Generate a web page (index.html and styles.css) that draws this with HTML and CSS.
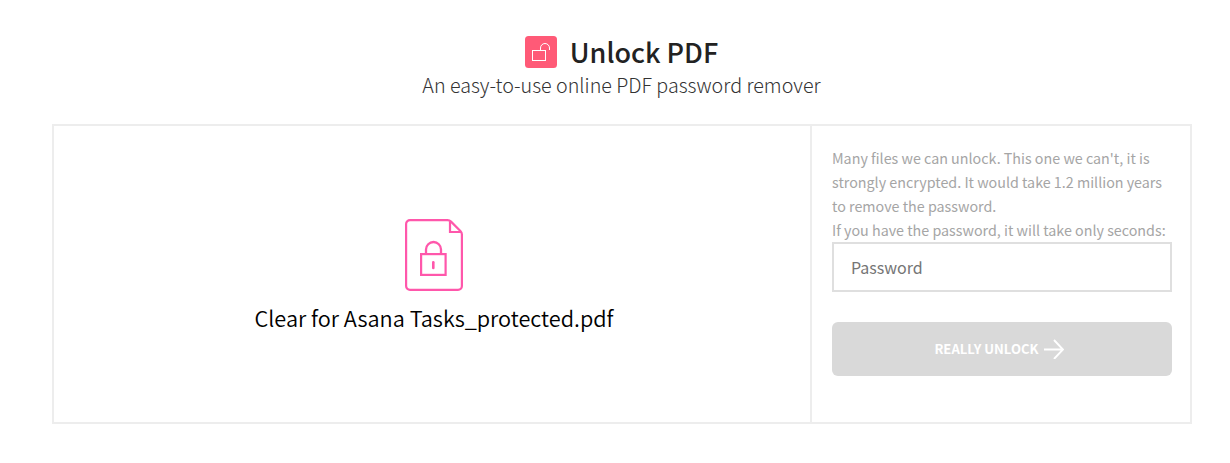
FILE: index.html
```html
<!DOCTYPE html>
<html lang="en">
<head>
<meta charset="utf-8">
<title>Unlock PDF</title>
<link rel="stylesheet" href="styles.css">
</head>
<body>
<header class="header">
  <div class="brand">
    <svg class="brand-icon" width="32" height="32" viewBox="0 0 32 32" fill="none" stroke="#fff">
      <rect width="32" height="32" rx="3.5" fill="#ff5a77" stroke="none"/>
      <rect x="7.5" y="14.5" width="13" height="10"/>
      <path d="M15.500 14.500v-2.500a4.500 4.500 0 0 1 9 0v2"/>
    </svg>
    <h1 class="title">Unlock PDF</h1>
  </div>
  <p class="subtitle">An easy-to-use online PDF password remover</p>
</header>
<main class="panel">
  <section class="file">
    <svg class="file-icon" width="58" height="72" viewBox="0 0 58 72" fill="none" stroke="#ff57ab" stroke-width="2.200">
      <path d="M5 1.100H42.500Q44.500 1.100 46 2.600L55.400 12Q56.900 13.500 56.900 15.500V67a3.900 3.900 0 0 1-3.900 3.900H5A3.900 3.900 0 0 1 1.100 67V5A3.900 3.900 0 0 1 5 1.100Z"/>
      <path d="M45 2.500V13H56"/>
      <rect x="16.100" y="35.100" width="24.500" height="20.800"/>
      <path d="M21 35v-4.500a7.500 7.500 0 0 1 15 0V35" stroke-width="2.300"/>
      <path d="M28.300 43.200v5.800" stroke-width="2.600" stroke-linecap="round"/>
    </svg>
    <p class="file-name">Clear for Asana Tasks_protected.pdf</p>
  </section>
  <form class="form">
    <p class="note">Many files we can unlock. This one we can't, it is<br>strongly encrypted. It would take 1.2 million years<br>to remove the password.<br>If you have the password, it will take only seconds:</p>
    <input class="password" type="password" placeholder="Password">
    <button class="submit" type="button">
      <span class="submit-label">REALLY UNLOCK</span>
      <svg width="20" height="20" viewBox="0 0 20 20" fill="none" stroke="#fff" stroke-width="1.900"><path d="M0 10.500H19M10 1L19 10.500L10 20"/></svg>
    </button>
  </form>
</main>
</body>
</html>
```
FILE: styles.css
```css
* { box-sizing: border-box; }
body {
  margin: 0;
  background: #fff;
  font-family: "Noto Sans CJK SC", "Noto Sans", sans-serif;
}
.header {
  width: 1139px;
  margin-left: 52px;
  padding-top: 36px;
  height: 124px;
  display: flex;
  flex-direction: column;
  align-items: center;
}
.brand { display: flex; align-items: center; gap: 13px; height: 32px; }
.brand-icon { flex: none; }
.title {
  margin: 0;
  font-size: 27px;
  line-height: 32px;
  font-weight: 500;
  color: #222;
  white-space: nowrap;
}
.subtitle {
  margin: 0;
  font-size: 19.7px;
  line-height: 34px;
  font-weight: 300;
  color: #333;
  white-space: nowrap;
}
.panel {
  width: 1140px;
  height: 300px;
  margin-left: 52px;
  border: 2px solid #ededed;
  display: flex;
}
.file {
  width: 758px;
  flex: none;
  border-right: 2px solid #ededed;
  padding: 93px 0 0 4px;
  display: flex;
  flex-direction: column;
  align-items: center;
}
.file-icon { display: block; }
.file-name {
  margin: 9px 0 0;
  font-size: 21.7px;
  line-height: 36px;
  font-weight: 350;
  color: #000;
  white-space: nowrap;
}
.form { padding: 20px 18px 0 20px; flex: 1; }
.note {
  margin: 0;
  font-size: 14.3px;
  line-height: 24px;
  color: #a5a5a5;
  white-space: nowrap;
}
.password {
  display: block;
  width: 340px;
  height: 50px;
  margin: 0;
  padding: 0 17px;
  border: 2px solid #dfdfdf;
  border-radius: 0;
  background: #fff;
  font: 400 16px/24px "Noto Sans CJK SC", "Noto Sans", sans-serif;
}
.password::placeholder { color: #757575; }
.submit {
  display: flex;
  align-items: center;
  justify-content: center;
  gap: 5px;
  width: 340px;
  height: 54px;
  margin-top: 30px;
  padding: 0 6px 0 0;
  border: 0;
  border-radius: 6px;
  background: #d9d9d9;
  color: #fff;
  font: 700 13.1px/20px "Noto Sans CJK SC", "Noto Sans", sans-serif;
}
.submit-label { white-space: nowrap; }
```
